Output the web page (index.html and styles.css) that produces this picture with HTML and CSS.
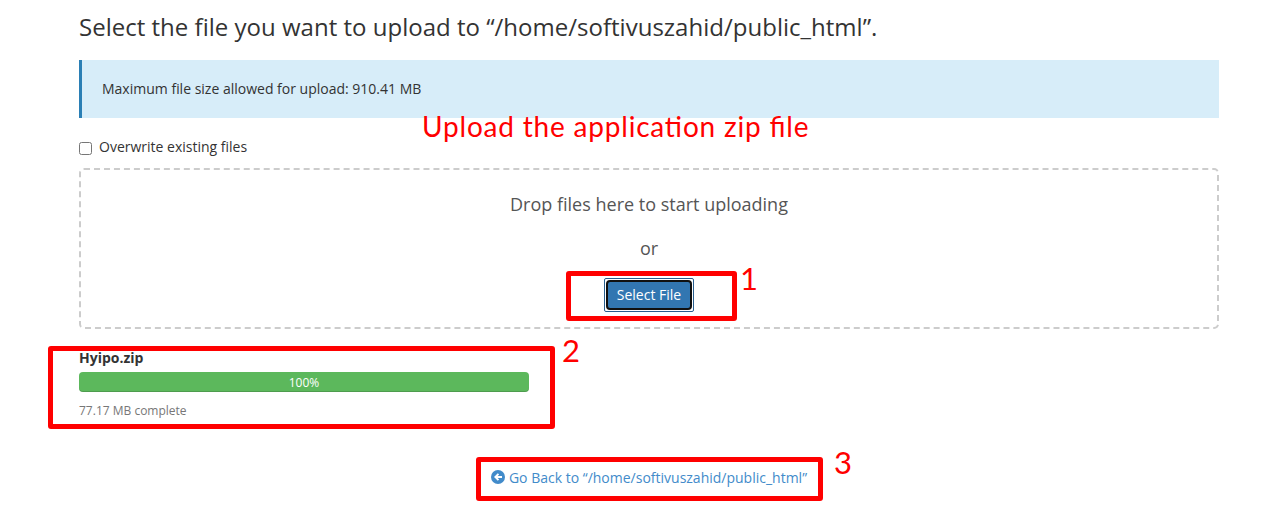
FILE: index.html
```html
<!DOCTYPE html>
<html lang="en">
<head>
<meta charset="utf-8">
<title>File Upload</title>
<link rel="stylesheet" href="styles.css">
</head>
<body>
<main class="page">
  <h1 class="title">Select the file you want to upload to “/home/softivuszahid/public_html”.</h1>
  <div class="callout">Maximum file size allowed for upload: 910.41 MB</div>
  <label class="overwrite"><input type="checkbox" class="check"><span>Overwrite existing files</span></label>
  <section class="dropzone">
    <p class="drop-text">Drop files here to start uploading</p>
    <p class="drop-or">or</p>
    <button type="button" class="select-btn"><span class="select-inner">Select File</span></button>
  </section>
  <section class="upload">
    <div class="file-name">Hyipo.zip</div>
    <div class="progress">100%</div>
    <div class="status">77.17 MB complete</div>
  </section>
  <footer class="footer">
    <a class="back">
      <svg class="back-icon" viewBox="0 0 14 14"><circle cx="7" cy="7" r="7" fill="#428bca"/><path d="M6.8 3.2 3 7l3.8 3.8 1.3-1.3L6.7 8.1H11V5.9H6.7l1.4-1.4z" fill="#fff"/></svg><span>Go Back to “/home/softivuszahid/public_html”</span>
    </a>
  </footer>
</main>
<div class="note note-title">Upload the application zip file</div>
<div class="mark mark-select"></div>
<div class="note note-one">1</div>
<div class="mark mark-progress"></div>
<div class="note note-two">2</div>
<div class="mark mark-back"></div>
<div class="note note-three">3</div>
</body>
</html>
```
FILE: styles.css
```css
* { box-sizing: border-box; }
body {
  margin: 0;
  height: 508px;
  overflow: hidden;
  position: relative;
  background: #fff;
  color: #333;
  font: 14px/20px "Open Sans", sans-serif;
}
.page { width: 1140px; margin-left: 79px; padding-top: 12px; }
.title { margin: 0 0 18px; font-size: 24px; line-height: 30px; font-weight: 400; letter-spacing: .01px; white-space: nowrap; }
.callout { height: 58px; padding: 19px 20px; border-left: 3px solid #2a7fb5; background: #d7edf9; }
.overwrite { display: flex; align-items: center; gap: 7px; height: 20px; margin: 19px 0 11px; }
.check { width: 13px; height: 13px; margin: 3px 0 0; }
.dropzone {
  display: flex;
  flex-direction: column;
  align-items: center;
  height: 161px;
  padding-top: 21px;
  border: 2px dashed #ccc;
  border-radius: 5px;
  color: #555;
  font-size: 18px;
  line-height: 26px;
}
.drop-text { margin: 0 0 18px; }
.drop-or { margin: 0 0 17px; }
.select-btn {
  width: 90px;
  height: 34px;
  padding: 1px;
  border: 1px solid #285e8e;
  border-radius: 2px;
  background: #fff;
  color: #fff;
  font: 14px/26px "Open Sans", sans-serif;
}
.select-inner { display: block; height: 30px; border: 2px solid #101010; border-radius: 4px; background: #3276b1; }
.upload { width: 450px; padding-top: 19px; }
.file-name { font-weight: 700; margin-bottom: 4px; }
.progress {
  height: 20px;
  border-radius: 4px;
  background: #5cb85c;
  box-shadow: inset 0 -1px 0 rgba(0, 0, 0, .15);
  color: #fff;
  font-size: 12px;
  line-height: 21px;
  text-align: center;
}
.status { margin-top: 9px; color: #777; font-size: 12px; }
.footer { display: flex; justify-content: center; margin-top: 47px; }
.back { display: flex; align-items: center; gap: 4px; color: #428bca; }
.back-icon { width: 14px; height: 14px; margin-top: -2px; }
.note { position: absolute; color: #f00; font: 28px/34px Lato, sans-serif; white-space: nowrap; }
.note-title { left: 422px; top: 109px; letter-spacing: .8px; font-feature-settings: "liga" 1; }
.note-one { left: 740px; top: 261px; font-size: 31px; }
.note-two { left: 562px; top: 333px; font-size: 31px; }
.note-three { left: 834px; top: 445px; font-size: 31px; }
.mark { position: absolute; border: 5px solid #f00; border-radius: 3px; }
.mark-select { left: 566px; top: 271px; width: 171px; height: 50px; }
.mark-progress { left: 48px; top: 346px; width: 507px; height: 83px; }
.mark-back { left: 476px; top: 457px; width: 347px; height: 44px; }
```
